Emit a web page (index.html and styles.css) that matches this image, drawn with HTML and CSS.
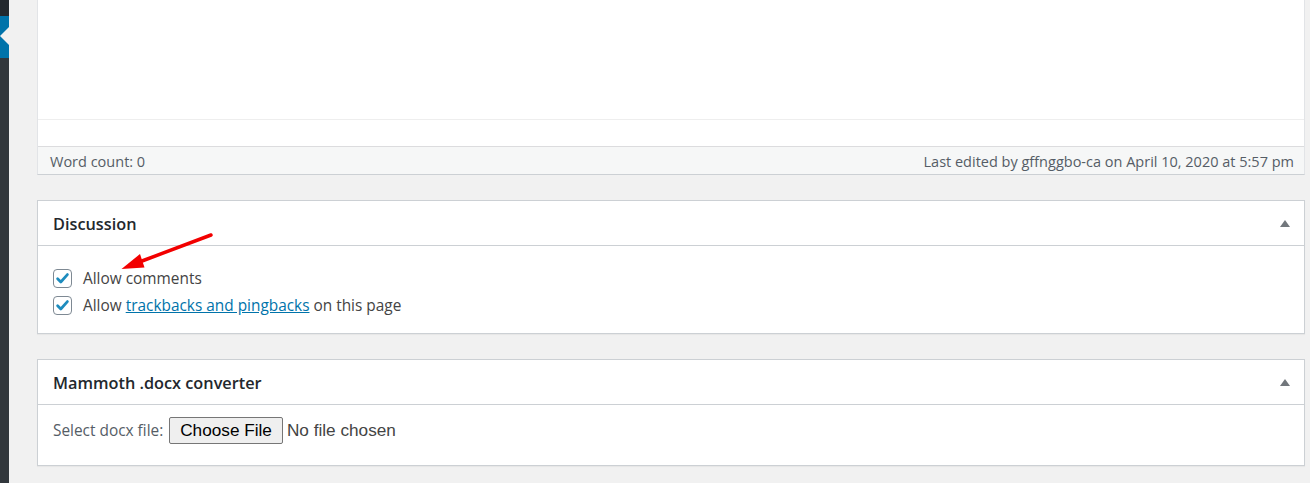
FILE: index.html
```html
<!DOCTYPE html>
<html>
<head>
    <title>Edit Page</title>
    <link rel="stylesheet" href="styles.css">
</head>
<body>
    <div class="sidebar">
        <div class="menu-top"></div>
        <div class="menu-current">
            <svg class="menu-arrow" width="9" height="42" viewBox="0 0 9 42">
                <polygon points="9,11 0,20 9,29" fill="#f1f1f1"/>
            </svg>
        </div>
    </div>

    <div class="main">
        <div class="editor">
            <div class="editor-area"></div>
            <div class="editor-pad"></div>
            <div class="status-bar">
                <span>Word count: 0</span>
                <span>Last edited by gffnggbo-ca on April 10, 2020 at 5:57 pm</span>
            </div>
        </div>

        <div class="postbox">
            <div class="postbox-header">
                <h2>Discussion</h2>
                <span class="toggle-arrow"></span>
            </div>
            <div class="inside">
                <label class="check-row">
                    <span class="checkbox"><svg viewBox="0 0 16 16" width="17" height="17"><path d="M3.4 8.3l3 3 6.2-7" fill="none" stroke="#1e8cbe" stroke-width="2.6" stroke-linecap="round" stroke-linejoin="round"/></svg></span>
                    Allow comments
                </label>
                <label class="check-row">
                    <span class="checkbox"><svg viewBox="0 0 16 16" width="17" height="17"><path d="M3.4 8.3l3 3 6.2-7" fill="none" stroke="#1e8cbe" stroke-width="2.6" stroke-linecap="round" stroke-linejoin="round"/></svg></span>
                    Allow&nbsp;<a href="#">trackbacks and pingbacks</a>&nbsp;on this page
                </label>
            </div>
            <!-- annotation arrow drawn over the box -->
            <svg class="annotation" width="105" height="44" viewBox="0 0 105 44">
                <line x1="31" y1="32" x2="100" y2="6" stroke="#f20000" stroke-width="3.5" stroke-linecap="round"/>
                <polygon points="10.5,40 29,25 33.5,38.5" fill="#f20000"/>
            </svg>
        </div>

        <div class="postbox">
            <div class="postbox-header">
                <h2>Mammoth .docx converter</h2>
                <span class="toggle-arrow"></span>
            </div>
            <div class="inside docx-row">
                <label for="docx">Select docx file:</label>
                <span class="file-btn">Choose File</span>
                <span class="file-name">No file chosen</span>
            </div>
        </div>
    </div>
</body>
</html>
```

FILE: styles.css
```css
body { margin: 0; background: #f1f1f1; font-family: "Open Sans", sans-serif; font-size: 14.5px; color: #444; display: flex; min-height: 483px; overflow: hidden; }
.sidebar { width: 9px; flex-shrink: 0; background: #32373c; }
.menu-top { height: 16px; background: #23282d; }
.menu-current { height: 42px; background: #0073aa; }
.menu-arrow { display: block; }

.main { flex: 1; padding: 0 5px 0 28px; }

.editor { background: #fff; border: 1px solid #e2e4e7; border-top: none; border-bottom-color: #ccd0d4; }
.editor-area { height: 119px; border-bottom: 1px solid #eee; }
.editor-pad { height: 26px; }
.status-bar { height: 26px; display: flex; justify-content: space-between; align-items: center; padding: 1px 10px 0 12px; background: #f6f7f7; border-top: 1px solid #dcdcde; color: #555d66; }

.postbox { position: relative; margin-top: 25px; background: #fff; border: 1px solid #ccd0d4; box-shadow: 0 1px 1px rgba(0,0,0,.04); }
.postbox-header { height: 42px; display: flex; align-items: center; justify-content: space-between; padding: 2px 14px 0 15px; border-bottom: 1px solid #ccd0d4; }
.postbox-header h2 { margin: 0; font-size: 16.3px; font-weight: 600; color: #23282d; }
.toggle-arrow { width: 0; height: 0; margin-top: -2px; border-left: 5px solid transparent; border-right: 5px solid transparent; border-bottom: 7px solid #72777c; }

.inside { padding: 19px 15px 14px; font-size: 15.4px; }
.check-row { display: flex; align-items: center; height: 27px; color: #444; }
.check-row a { color: #0073aa; text-decoration: underline; }
.checkbox { width: 17px; height: 17px; border: 1px solid #7e8993; border-radius: 4px; margin-right: 11px; display: flex; }

.annotation { position: absolute; left: 73px; top: 28px; }

.docx-row { display: flex; align-items: center; padding: 12px 15px 21px; color: #555d66; }
.docx-row label { margin-right: 6px; }
.file-btn { font-family: "Liberation Sans", Arial, sans-serif; font-size: 17.2px; line-height: 21px; color: #000; background: #efefef; border: 1px solid #767676; border-radius: 2px; padding: 2px 10px; }
.file-name { font-family: "Liberation Sans", Arial, sans-serif; font-size: 17.2px; color: #444; margin-left: 4px; }
```
